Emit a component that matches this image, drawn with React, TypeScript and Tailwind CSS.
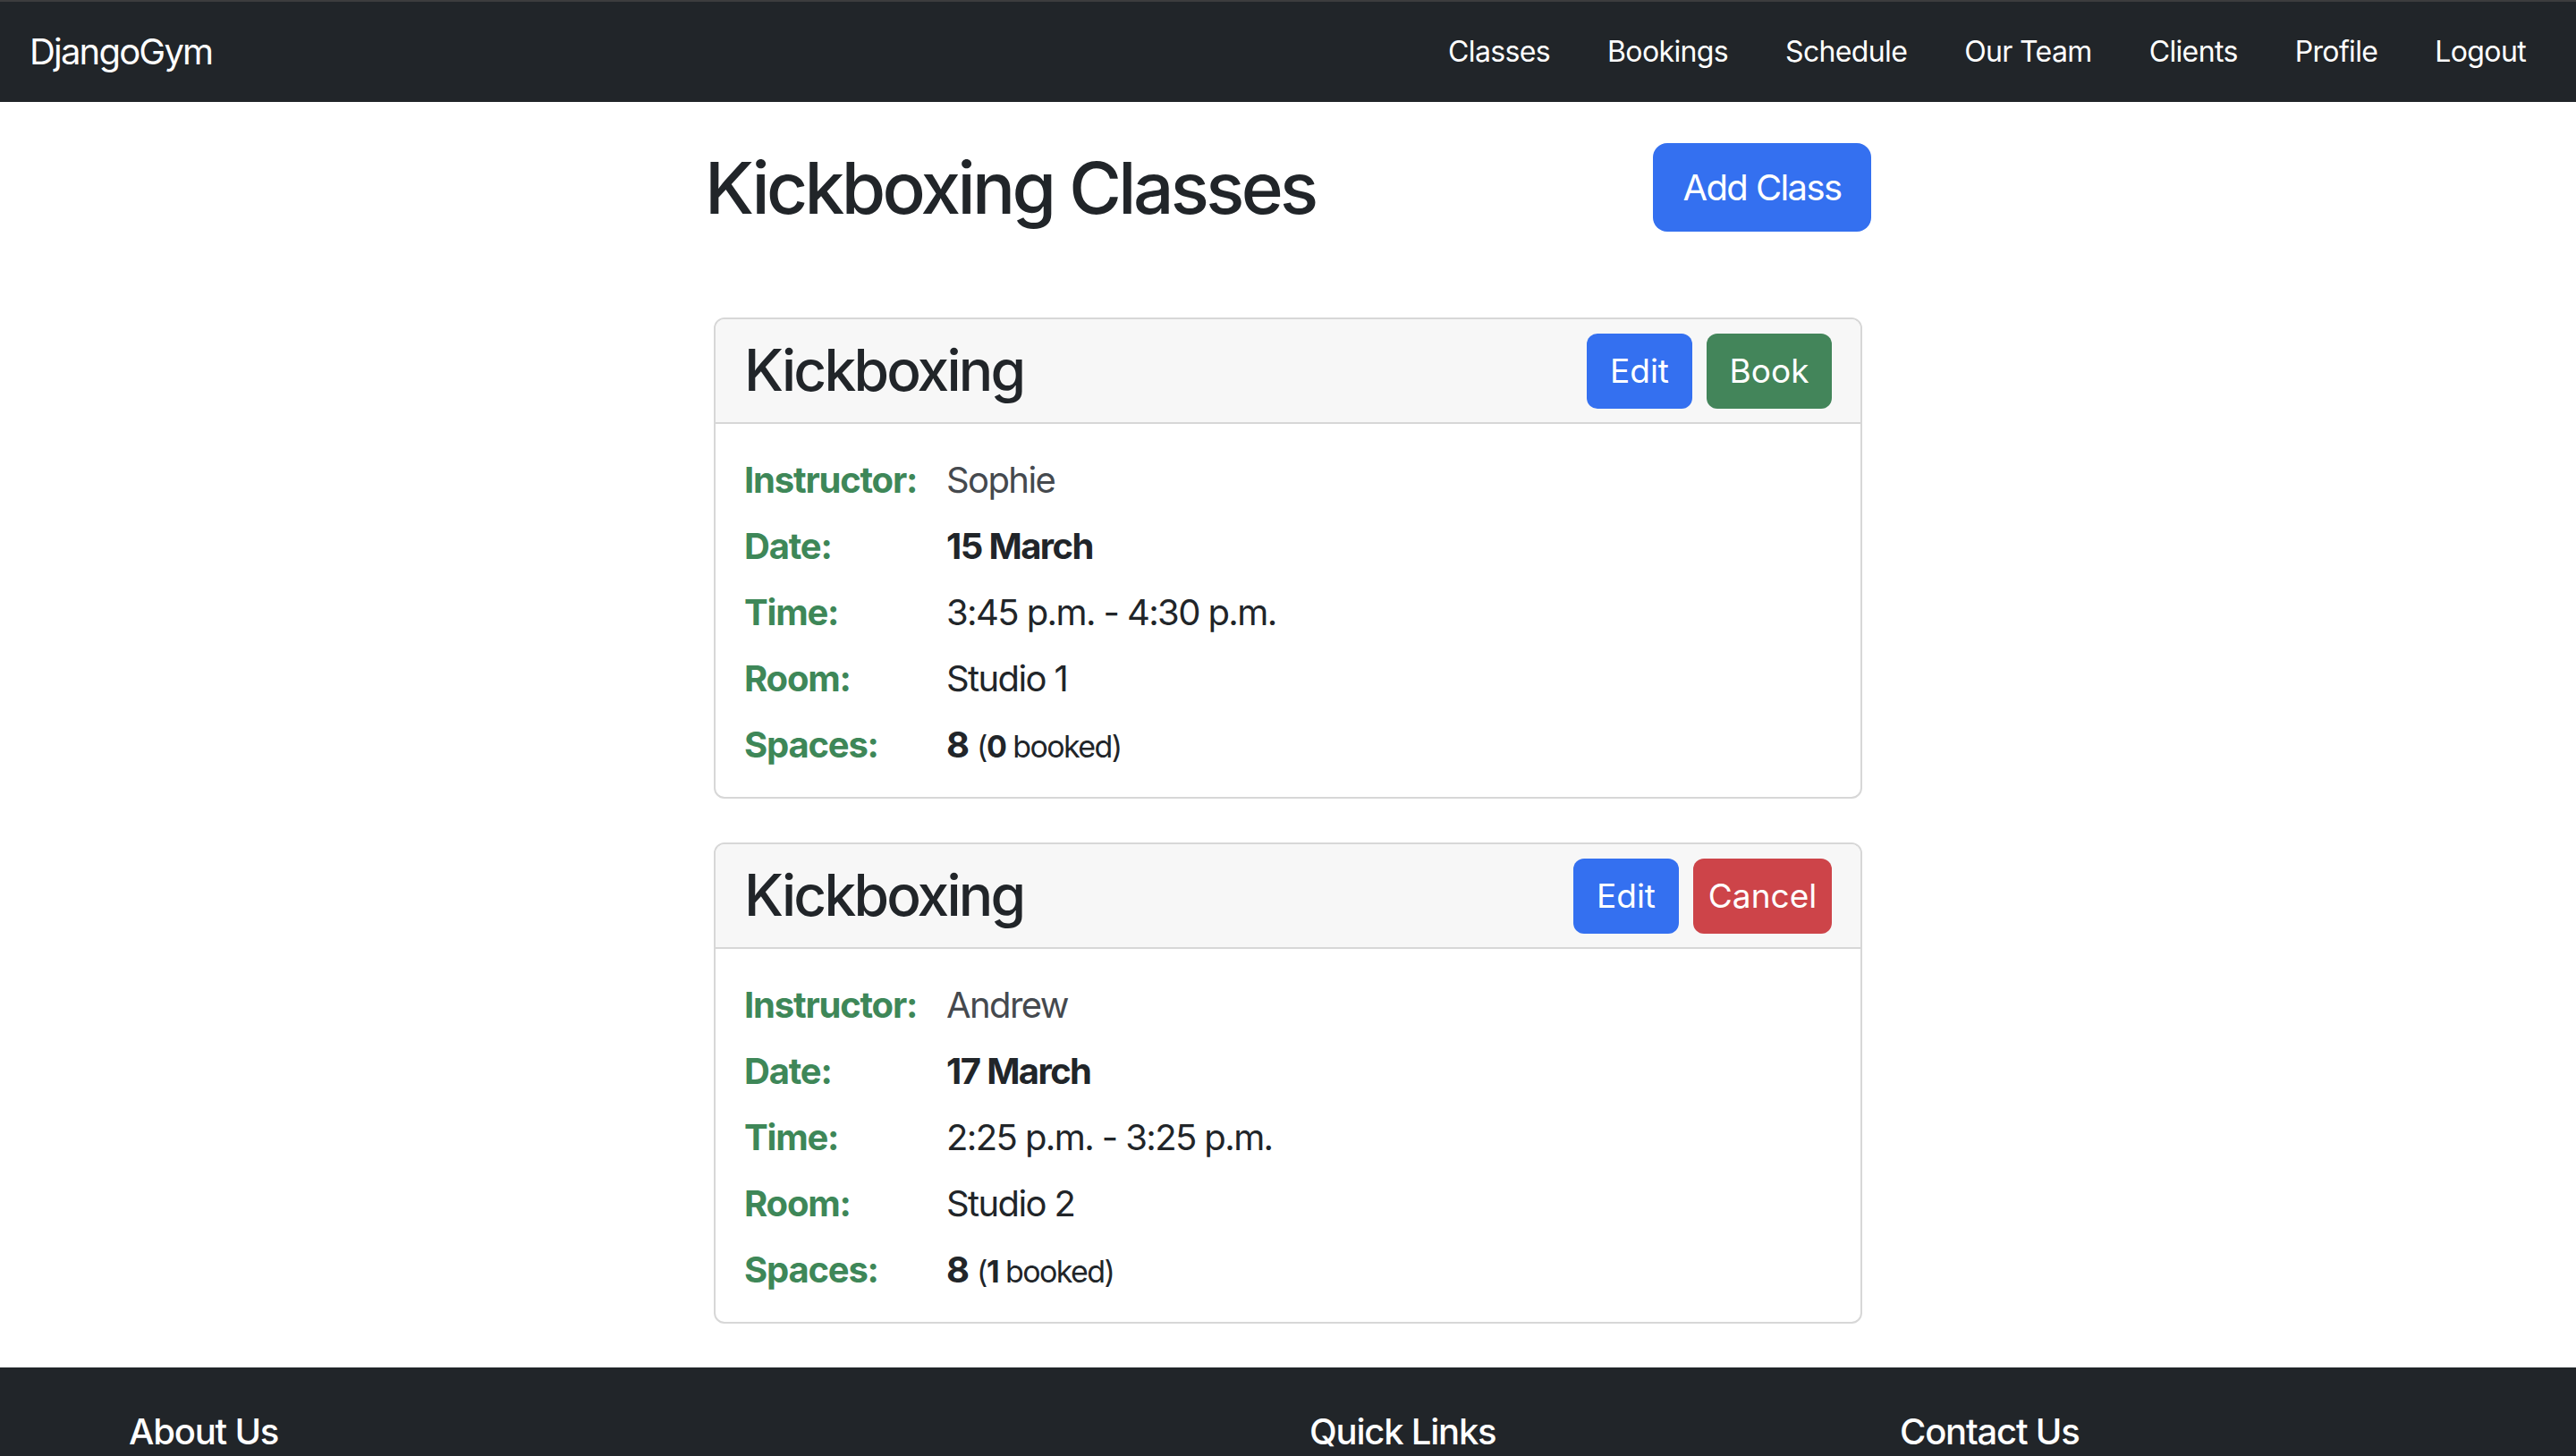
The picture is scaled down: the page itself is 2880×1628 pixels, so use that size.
import React from "react";

type GymClass = {
  id: number;
  name: string;
  instructor: string;
  date: string;
  time: string;
  room: string;
  spaces: number;
  booked: number;
  isBooked: boolean;
};

const classes: GymClass[] = [
  {
    id: 1,
    name: "Kickboxing",
    instructor: "Sophie",
    date: "15 March",
    time: "3:45 p.m. - 4:30 p.m.",
    room: "Studio 1",
    spaces: 8,
    booked: 0,
    isBooked: false,
  },
  {
    id: 2,
    name: "Kickboxing",
    instructor: "Andrew",
    date: "17 March",
    time: "2:25 p.m. - 3:25 p.m.",
    room: "Studio 2",
    spaces: 8,
    booked: 1,
    isBooked: true,
  },
];

const navLinks = ["Classes", "Bookings", "Schedule", "Our Team", "Clients", "Profile", "Logout"];

function Row({ label, children }: { label: string; children: React.ReactNode }) {
  return (
    <div className="flex h-[74px] items-center text-[40px] leading-[1.2]">
      <span className="w-[226px] shrink-0 font-bold tracking-[-0.03em] text-[#3e8758]">{label}</span>
      <span className="tracking-[-0.04em]">{children}</span>
    </div>
  );
}

function ClassCard({ item }: { item: GymClass }) {
  return (
    <div className="overflow-hidden rounded-[12px] border-2 border-[#d7d7d7] bg-white">
      <div className="flex h-[117px] items-center justify-between border-b-2 border-[#d7d7d7] bg-[#f7f7f7] px-[32px]">
        <h2 className="text-[64px] font-medium leading-[1.2] tracking-[-0.044em]">{item.name}</h2>
        <div className="flex gap-[16px]">
          <button className="flex h-[84px] w-[118px] items-center justify-center rounded-[12px] bg-[#3470f0] text-[37px] text-white">
            Edit
          </button>
          {item.isBooked ? (
            <button className="flex h-[84px] w-[155px] items-center justify-center rounded-[12px] bg-[#cd4449] text-[37px] text-white">
              Cancel
            </button>
          ) : (
            <button className="flex h-[84px] w-[140px] items-center justify-center rounded-[12px] bg-[#43855a] text-[37px] text-white">
              Book
            </button>
          )}
        </div>
      </div>
      <div className="px-[32px] pb-[21px] pt-[26px]">
        <Row label="Instructor:">
          <span className="text-[#45494e]">{item.instructor}</span>
        </Row>
        <Row label="Date:">
          <span className="font-bold">{item.date}</span>
        </Row>
        <Row label="Time:">{item.time}</Row>
        <Row label="Room:">{item.room}</Row>
        <Row label="Spaces:">
          <span className="font-bold">{item.spaces}</span>{" "}
          <small className="text-[34px]">
            (<span className="font-bold">{item.booked}</span> booked)
          </small>
        </Row>
      </div>
    </div>
  );
}

export default function App() {
  return (
    <div className="min-h-screen bg-white font-[Inter,sans-serif] text-[#212529]">
      <nav className="flex h-[114px] items-center border-t-2 border-[#3c3c3e] bg-[#212529] pl-[33px] pr-[56px]">
        <a href="#" className="text-[40px] leading-none tracking-[-0.045em] text-white">
          DjangoGym
        </a>
        <ul className="ml-auto flex gap-[64px] text-[32px] tracking-[-0.02em] text-white">
          {navLinks.map((link) => (
            <li key={link}>
              <a href="#">{link}</a>
            </li>
          ))}
        </ul>
      </nav>

      <main className="flex flex-col items-center pb-[49px] pt-[46px]">
        <div className="flex w-[1304px] items-center justify-between">
          <h1 className="text-[80px] font-medium leading-[1.2] tracking-[-0.045em]">Kickboxing Classes</h1>
          <button className="flex h-[99px] w-[244px] items-center justify-center rounded-[16px] bg-[#3470f0] text-[40px] tracking-[-0.04em] text-white">
            Add Class
          </button>
        </div>

        <div className="mt-[96px] flex w-[1284px] flex-col gap-[49px]">
          {classes.map((item) => (
            <ClassCard key={item.id} item={item} />
          ))}
        </div>
      </main>

      <footer className="bg-[#212529] pb-[96px] pt-[48px] text-white">
        <div className="mx-auto grid w-[2640px] grid-cols-4">
          <div className="col-span-2 px-[24px]">
            <h5 className="text-[40px] font-medium leading-[1.2] tracking-[-0.03em]">About Us</h5>
            <p className="mt-[16px] text-[32px] text-[#adb5bd]">
              DjangoGym helps you book classes and keep track of your training.
            </p>
          </div>
          <div className="px-[24px]">
            <h5 className="text-[40px] font-medium leading-[1.2] tracking-[-0.03em]">Quick Links</h5>
            <ul className="mt-[16px] text-[32px] text-[#adb5bd]">
              <li>Classes</li>
              <li>Schedule</li>
              <li>Our Team</li>
            </ul>
          </div>
          <div className="px-[24px]">
            <h5 className="text-[40px] font-medium leading-[1.2] tracking-[-0.03em]">Contact Us</h5>
            <p className="mt-[16px] text-[32px] text-[#adb5bd]">info@djangogym.com</p>
          </div>
        </div>
      </footer>
    </div>
  );
}
